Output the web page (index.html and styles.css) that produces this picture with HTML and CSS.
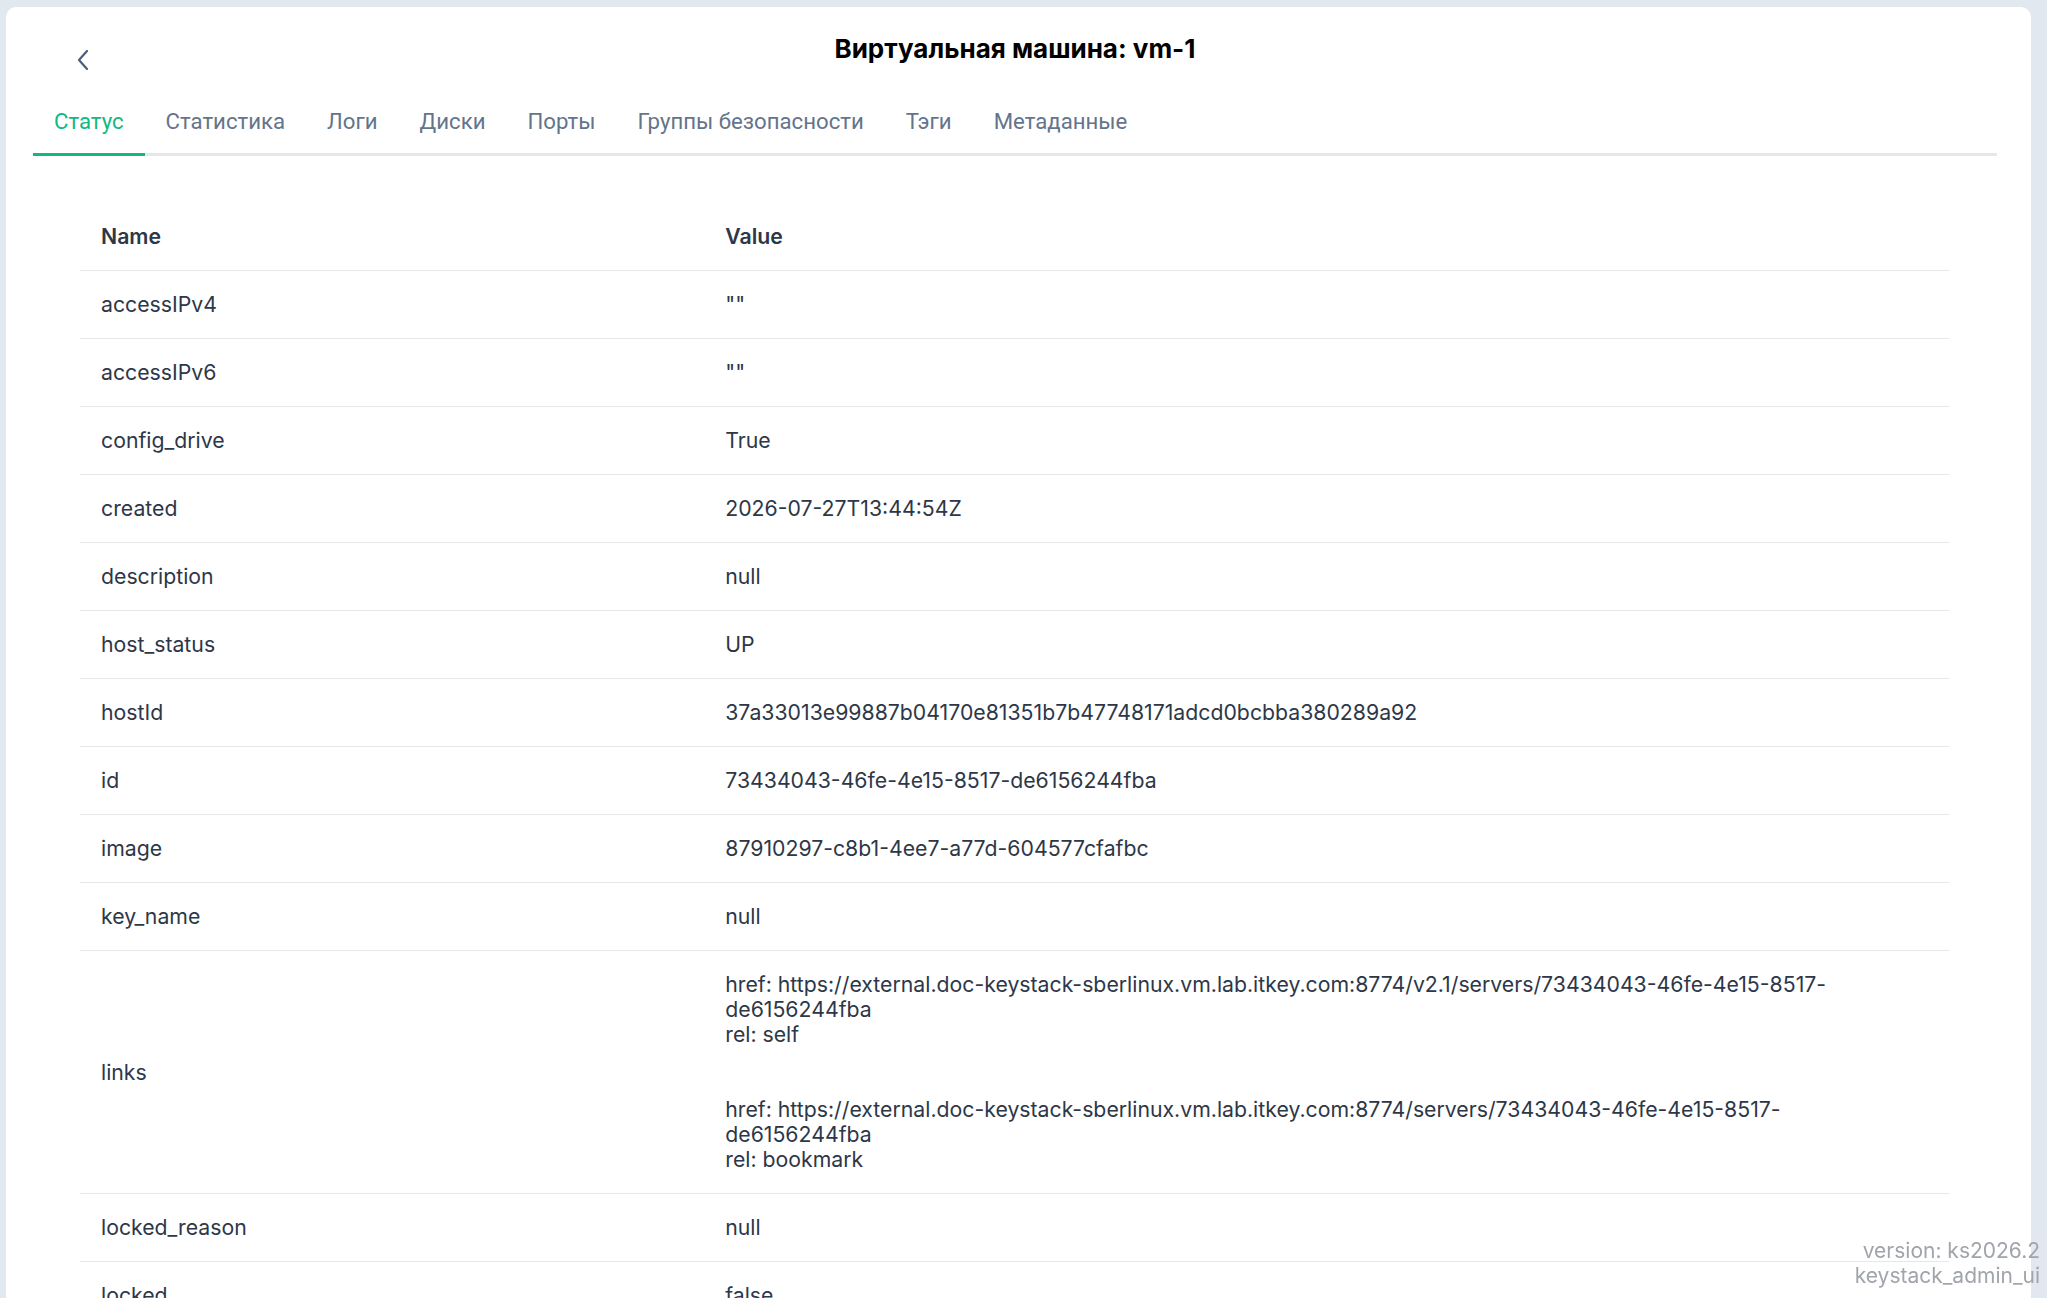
FILE: index.html
```html
<!DOCTYPE html>
<html lang="ru">
<head>
    <meta charset="UTF-8">
    <meta name="viewport" content="width=device-width, initial-scale=1.0">
    <title>Виртуальная машина: vm-1</title>
    <link rel="stylesheet" href="styles.css">
</head>
<body>
    <div class="card">
        <div class="header">
            <button class="back-btn" aria-label="Назад">
                <svg width="14" height="22" viewBox="0 0 14 22">
                    <path d="M11 2 L3 11 L11 20" fill="none" stroke="#4a5f7e" stroke-width="2.2" stroke-linecap="round" stroke-linejoin="round"/>
                </svg>
            </button>
            <h1 class="title">Виртуальная машина: vm-1</h1>
        </div>

        <div class="tabs">
            <div class="tab active">Статус</div>
            <div class="tab">Статистика</div>
            <div class="tab">Логи</div>
            <div class="tab">Диски</div>
            <div class="tab">Порты</div>
            <div class="tab">Группы безопасности</div>
            <div class="tab">Тэги</div>
            <div class="tab">Метаданные</div>
        </div>

        <table class="props">
            <thead>
                <tr><th>Name</th><th>Value</th></tr>
            </thead>
            <tbody>
                <tr><td>accessIPv4</td><td>""</td></tr>
                <tr><td>accessIPv6</td><td>""</td></tr>
                <tr><td>config_drive</td><td>True</td></tr>
                <tr><td>created</td><td>2026-07-27T13:44:54Z</td></tr>
                <tr><td>description</td><td>null</td></tr>
                <tr><td>host_status</td><td>UP</td></tr>
                <tr><td>hostId</td><td>37a33013e99887b04170e81351b7b47748171adcd0bcbba380289a92</td></tr>
                <tr><td>id</td><td>73434043-46fe-4e15-8517-de6156244fba</td></tr>
                <tr><td>image</td><td>87910297-c8b1-4ee7-a77d-604577cfafbc</td></tr>
                <tr><td>key_name</td><td>null</td></tr>
                <tr>
                    <td>links</td>
                    <td>
                        <div class="link-item">href: https://external.doc-keystack-sberlinux.vm.lab.itkey.com:8774/v2.1/servers/73434043-46fe-4e15-8517-de6156244fba<br>rel: self</div>
                        <div class="link-item">href: https://external.doc-keystack-sberlinux.vm.lab.itkey.com:8774/servers/73434043-46fe-4e15-8517-de6156244fba<br>rel: bookmark</div>
                    </td>
                </tr>
                <tr><td>locked_reason</td><td>null</td></tr>
                <tr><td>locked</td><td>false</td></tr>
                <tr><td>metadata</td><td>{}</td></tr>
                <tr><td>name</td><td>vm-1</td></tr>
            </tbody>
        </table>
    </div>

    <div class="version">version: ks2026.2<br>keystack_admin_ui</div>
</body>
</html>
```

FILE: styles.css
```css
body {
    margin: 0;
    background: #e2e8f0;
    font-family: 'Inter', 'Noto Sans', sans-serif;
    color: #2d3748;
    height: 100vh;
    overflow: hidden;
}

.card {
    background: #fff;
    margin: 7px 16px 0 6px;
    border-radius: 10px 10px 0 0;
    padding: 0 34px 0 27px;
    min-height: 1400px;
}

.header {
    display: flex;
    align-items: center;
    justify-content: center;
    position: relative;
    height: 83px;
}

.back-btn {
    position: absolute;
    left: 43px;
    top: 42px;
    background: none;
    border: none;
    padding: 0;
    cursor: pointer;
    line-height: 0;
}

.title {
    margin: 0;
    font-size: 26px;
    font-weight: 700;
    color: #000;
}

.tabs {
    display: flex;
    border-bottom: 3px solid #e5e7eb;
}

.tab {
    font-family: 'Roboto', sans-serif;
    font-size: 22.2px;
    color: #64748b;
    padding: 18px 21px 19px;
    margin-bottom: -3px;
    border-bottom: 3px solid transparent;
    cursor: pointer;
}

.tab.active {
    color: #10b981;
    border-bottom-color: #10b981;
}

.props {
    width: calc(100% - 95px);
    margin: 47px 48px 0 47px;
    border-collapse: collapse;
    font-size: 21.25px;
    line-height: 25px;
}

.props th,
.props td {
    text-align: left;
    padding: 21px 21px;
    vertical-align: middle;
}

.props th {
    font-weight: 600;
    border-bottom: 1px solid #e5e7eb;
}

.props td {
    border-bottom: 1px solid #e5e7eb;
}

.props td:first-child,
.props th:first-child {
    width: 33.4%;
}

.link-item {
    max-width: 1150px;
}

.link-item + .link-item {
    margin-top: 50px;
}

.version {
    position: fixed;
    right: 7px;
    bottom: 10px;
    text-align: right;
    font-size: 21px;
    line-height: 25px;
    color: #a0a4ab;
}
```
